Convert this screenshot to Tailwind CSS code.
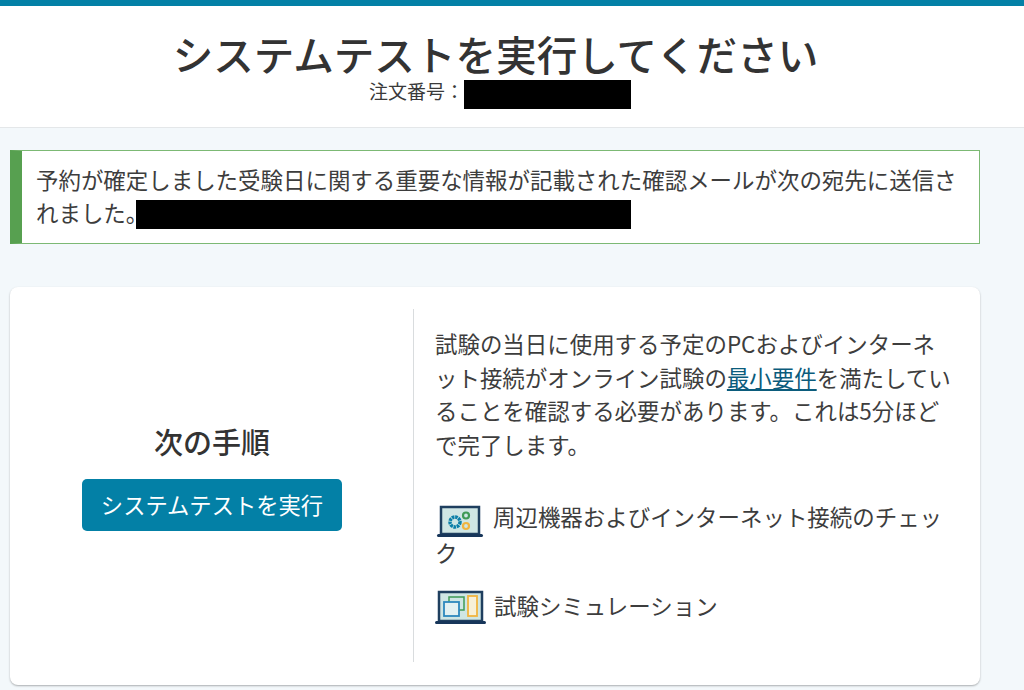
<!DOCTYPE html>
<html lang="ja">
<head>
    <meta charset="UTF-8">
    <title>システムテスト</title>
    <script src="https://cdn.jsdelivr.net/npm/@tailwindcss/browser@4"></script>
</head>
<body class="h-[690px] overflow-hidden bg-[#f3f8fb] text-[#333333] font-['Noto_Sans_CJK_JP','Noto_Sans',sans-serif]">

<!-- Header -->
<header class="h-[128px] bg-white border-t-[6px] border-t-[#0380a6] border-b border-b-[#e4e7e9] flex flex-col items-center pt-[23px] pr-[33px]">
    <h1 class="text-[40.6px] leading-[50px] font-medium">システムテストを実行してください</h1>
    <div class="flex items-start text-[19px] leading-[24px] ml-[9px] text-[#3a3a3a]">
        <span>注文番号：</span>
        <span class="w-[167px] h-[29px] mt-[1px] bg-black"></span>
    </div>
</header>

<!-- Confirmation notice -->
<div class="ml-[10px] w-[970px] h-[94px] mt-[22px] bg-white border border-[#7cb974] border-l-[12px] border-l-[#57a050] pl-[14px] pr-[14px] pt-[12px] text-[22.46px] leading-[33px] text-[#3d3d3d]">
    <p>予約が確定しました受験日に関する重要な情報が記載された確認メールが次の宛先に送信さ</p>
    <p class="flex items-start">れました。<span class="w-[495px] h-[29px] bg-black -ml-[12px] mt-[4px]"></span></p>
</div>

<!-- Next steps card -->
<main class="ml-[10px] w-[970px] h-[398px] mt-[43px] bg-white rounded-[8px] shadow-[0_1px_2px_rgba(0,0,0,0.3)] flex pt-[22px] pb-[23px]">
    <section class="w-[404px] shrink-0 border-r border-r-[#d9dcde] flex flex-col items-center pt-[112px] pl-[1px]">
        <h2 class="text-[29px] leading-[40px] font-medium">次の手順</h2>
        <button class="mt-[18px] w-[260px] h-[52px] bg-[#0380a6] rounded-[5px] text-white text-[22.3px]">システムテストを実行</button>
    </section>
    <section class="pl-[21px] pr-[24px] flex-1 pt-[18px] text-[22.46px] text-[#3d3d3d]">
        <p class="leading-[33.5px]">試験の当日に使用する予定のPCおよびインターネット接続がオンライン試験の<a class="text-[#0b5c7c] underline">最小要件</a>を満たしていることを確認する必要があります。これは5分ほどで完了します。</p>
        <div class="mt-[37px] leading-[36px] flex flex-col gap-[17px]">
            <p>
                <svg class="inline-block -my-[10px] align-[-3px] ml-[1px] mr-[9px]" width="48" height="34" viewBox="0 0 48 34" fill="none">
                    <rect x="5" y="2" width="38" height="27" fill="#cfe6e4" stroke="#1f3f5f" stroke-width="2.5"/>
                    <rect x="1" y="29" width="46" height="3" rx="1.5" fill="#17365a"/>
                    <circle cx="19" cy="17" r="5" stroke="#0b7fa8" stroke-width="3.5" stroke-dasharray="2.6 0.7"/>
                    <circle cx="30" cy="10.5" r="3" stroke="#3f9a55" stroke-width="2.2"/>
                    <circle cx="30" cy="21" r="3" stroke="#f0b440" stroke-width="2.2"/>
                </svg>周辺機器およびインターネット接続のチェック
            </p>
            <p>
                <svg class="inline-block -my-[10px] align-[-1px] mr-[8px]" width="51" height="36" viewBox="0 0 51 36" fill="none">
                    <rect x="4" y="2" width="43" height="29" fill="#cfe6e4" stroke="#1f3f5f" stroke-width="2.5"/>
                    <rect x="0" y="31" width="51" height="3" rx="1.5" fill="#17365a"/>
                    <rect x="14" y="7" width="15" height="13" stroke="#3f9a55" stroke-width="1.5"/>
                    <rect x="9" y="12" width="15" height="14" fill="#e3f1f2" stroke="#2d88bd" stroke-width="1.8"/>
                    <rect x="33" y="6" width="9" height="20" fill="#f7f0d8" stroke="#f0b440" stroke-width="1.8"/>
                </svg>試験シミュレーション
            </p>
        </div>
    </section>
</main>

</body>
</html>
